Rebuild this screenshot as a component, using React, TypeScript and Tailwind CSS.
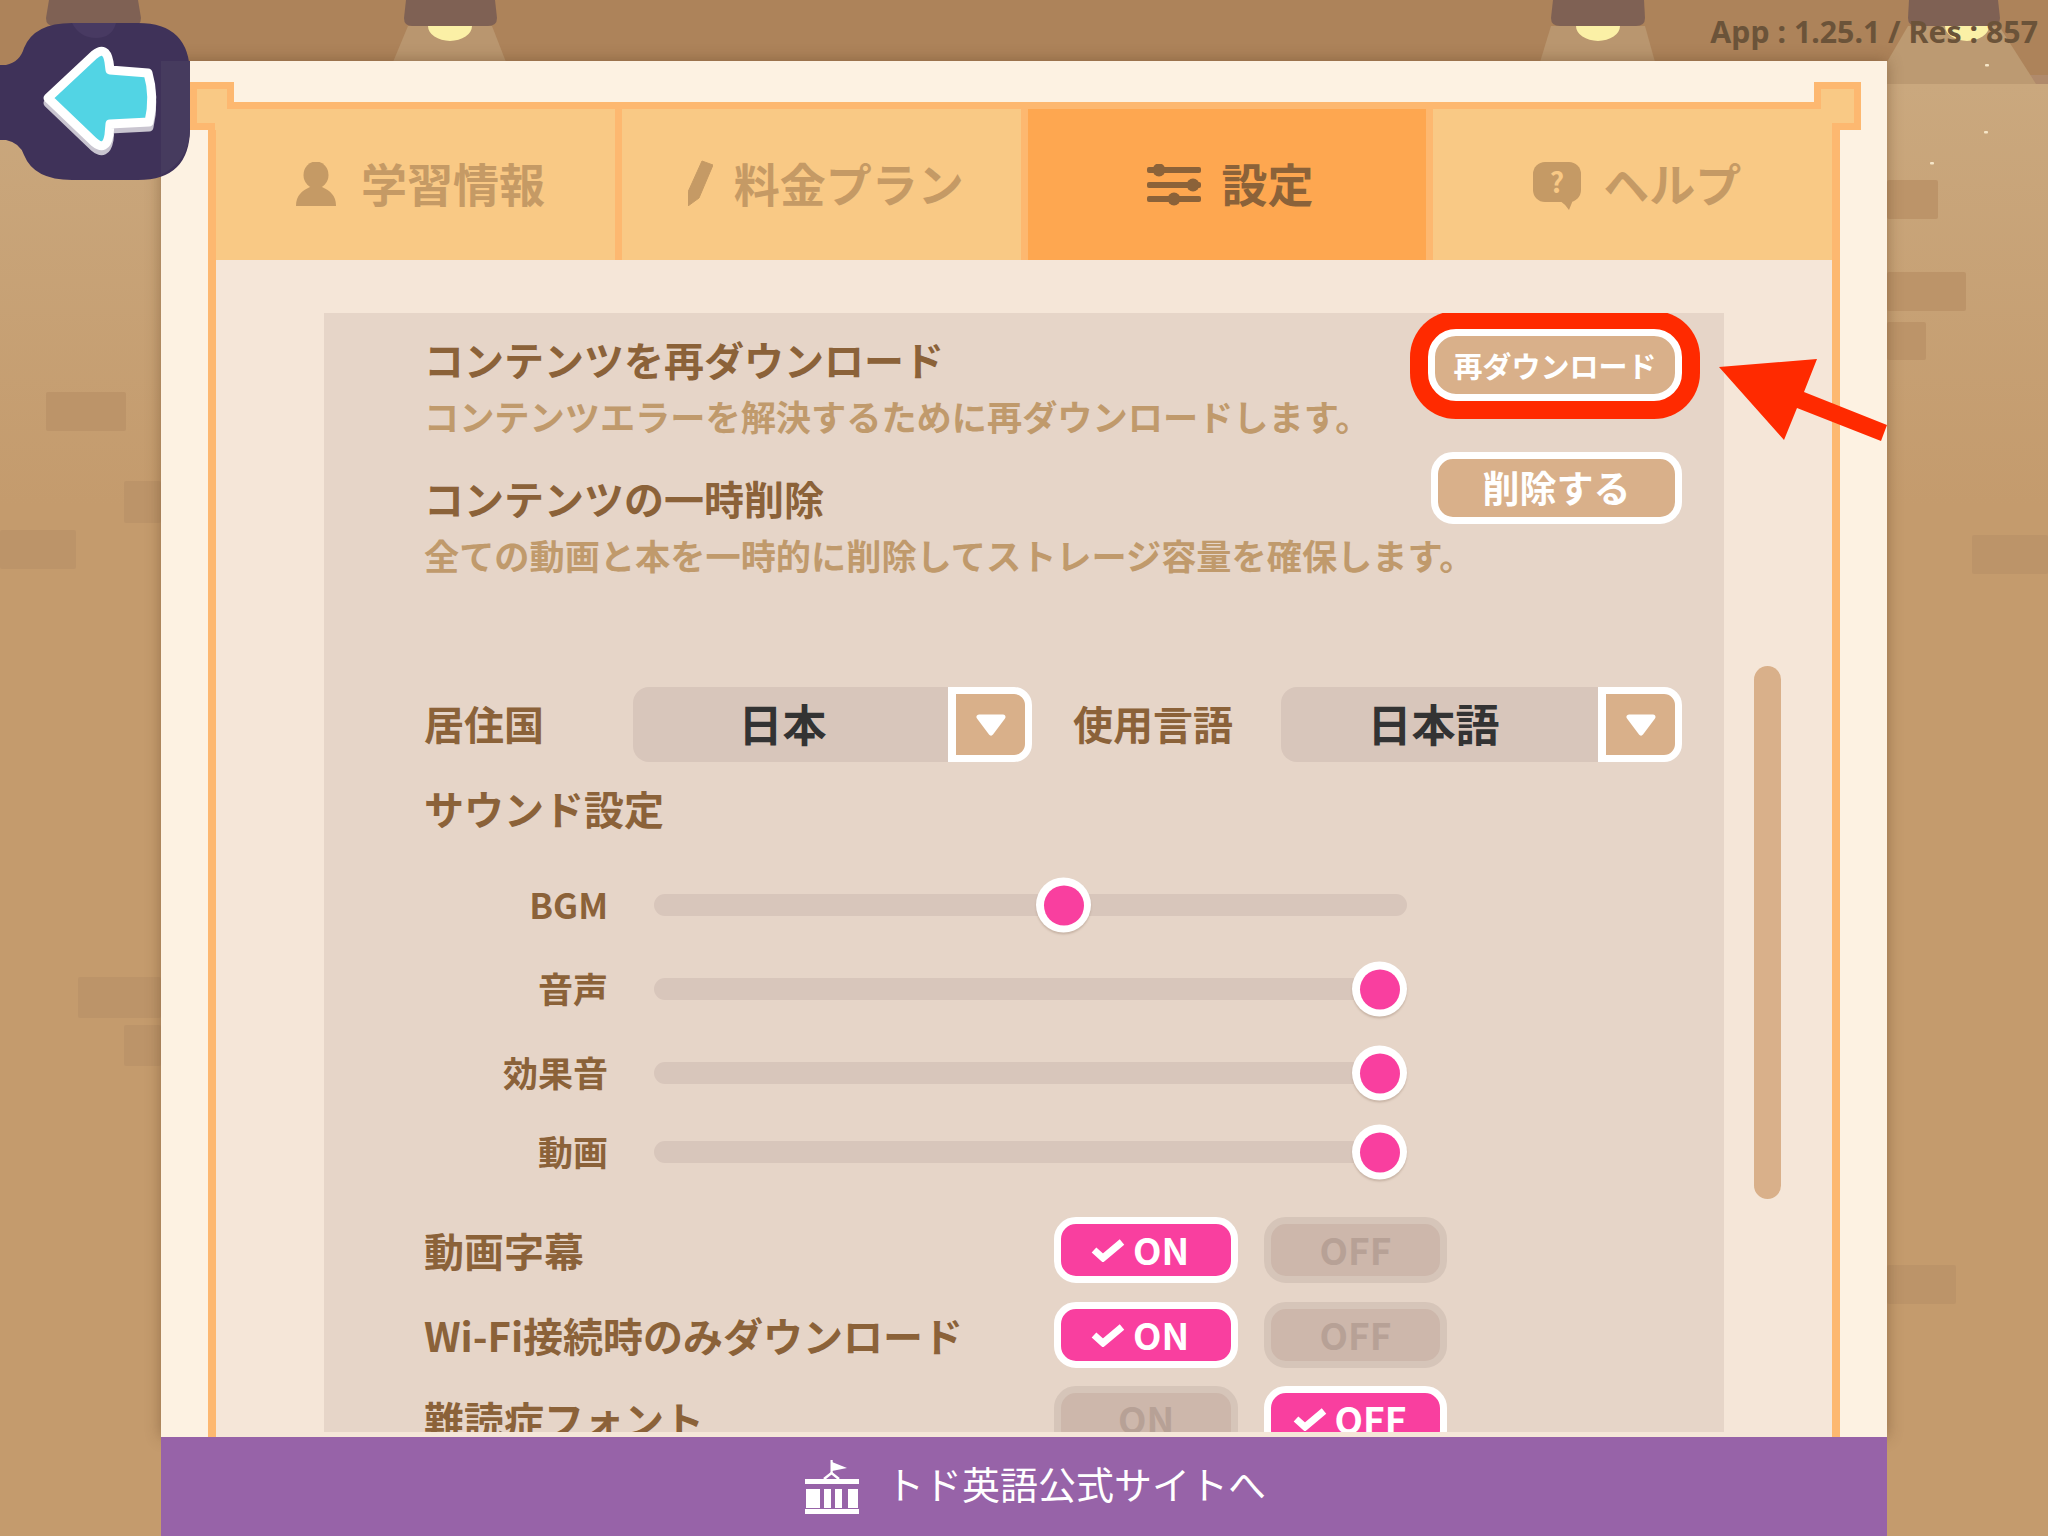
import React from "react";

const jp = "font-['Noto_Sans_CJK_JP',sans-serif]";

function Bricks() {
  const items = [
    "left-[46px] top-[392px] w-[80px] h-[39px]",
    "left-[124px] top-[481px] w-[37px] h-[42px]",
    "left-0 top-[530px] w-[76px] h-[39px]",
    "left-[78px] top-[977px] w-[83px] h-[41px]",
    "left-[124px] top-[1025px] w-[37px] h-[41px]",
    "left-[1887px] top-[180px] w-[51px] h-[39px]",
    "left-[1887px] top-[272px] w-[79px] h-[39px]",
    "left-[1887px] top-[322px] w-[39px] h-[38px]",
    "left-[1972px] top-[535px] w-[76px] h-[39px]",
    "left-[1887px] top-[1265px] w-[69px] h-[39px]",
  ];
  return (
    <>
      {items.map((c) => (
        <div key={c} className={`absolute rounded-[2px] bg-[#bc9469] ${c}`} />
      ))}
    </>
  );
}

function Lamps() {
  return (
    <svg className="absolute left-0 top-0" width="2048" height="200" viewBox="0 0 2048 200">
      <polygon points="408,26 492,26 506,62 393,62" fill="#b9966f" />
      <polygon points="1551,26 1645,26 1655,62 1540,62" fill="#b9966f" />
      <polygon points="1908,26 1999,26 2036,84 1887,84 1887,62" fill="#bc9a72" />
      <path d="M428 26 A22 15 0 0 0 472 26 Z M1576 26 A22 15 0 0 0 1620 26 Z M1945 26 A22 15 0 0 0 1989 26 Z" fill="#fbf0a6" />
      <path d="M49 0 H138 L141 18 Q141 26 132 26 H54 Q46 26 46 18 Z" fill="#7f6154" />
      <path d="M406 0 H495 L497 18 Q497 26 488 26 H412 Q404 26 404 18 Z" fill="#7f6154" />
      <path d="M1553 0 H1644 L1645 18 Q1645 26 1636 26 H1560 Q1551 26 1551 18 Z" fill="#7f6154" />
      <path d="M1909 0 H1998 L2000 18 Q2000 26 1991 26 H1917 Q1908 26 1908 18 Z" fill="#7f6154" />
      {[[15, 224], [1984, 131], [1930, 162], [2032, 223], [1985, 64]].map(([x, y]) => (
        <rect key={x} x={x} y={y} width="4" height="2.5" rx="1" fill="#f6e6c8" />
      ))}
    </svg>
  );
}

function BackButton() {
  const arrow = "M48 98 L94 55 Q106 45 109 62 L110 70 L148 73 Q155 97 149 122 L110 124 L109 135 Q106 152 94 142 Z";
  return (
    <svg className="absolute left-0 top-0" width="200" height="190" viewBox="0 0 200 190">
      <path
        d="M0 65 H6 Q20 62 24 48 Q34 23 72 23 H138 Q190 23 190 75 V128 Q190 180 138 180 H72 Q34 180 24 155 Q20 143 6 140 H0 Z"
        fill="#3f3259"
      />
      <path d="M161 61 H190 V128 Q190 160 161 175 Z" fill="#463b5e" />
      <path d="M72 23 H116 Q112 38 96 38 Q80 38 72 23 Z" fill="#483a62" />
      <path d={arrow} fill="#c9c5d0" stroke="#c9c5d0" strokeWidth="9" strokeLinejoin="round" transform="translate(0 5)" />
      <path d={arrow} fill="#52d4e4" stroke="#ffffff" strokeWidth="9" strokeLinejoin="round" />
    </svg>
  );
}

function PersonIcon() {
  return (
    <svg width="40" height="44" viewBox="0 0 40 44" fill="#c59a65" className="mt-[4px]">
      <ellipse cx="20" cy="13" rx="12.5" ry="13.5" />
      <path d="M0 44 C0 33 6 29 14 25 H26 C34 29 40 33 40 44 Z" />
    </svg>
  );
}

function PencilIcon() {
  return (
    <svg width="25" height="46" viewBox="0 0 25 46" fill="#c59a65" className="mt-[2px]">
      <path d="M14 1 L25 5 L11 38 L0 46 L0 32 Z" stroke="#c59a65" strokeLinejoin="round" strokeWidth="1" />
    </svg>
  );
}

function SlidersIcon() {
  return (
    <svg width="54" height="42" viewBox="0 0 54 42" fill="#8b6239" className="mt-[6px]">
      <rect x="0" y="3" width="54" height="6" rx="2" />
      <rect x="0" y="18" width="54" height="6" rx="2" />
      <rect x="0" y="32" width="54" height="6" rx="2" />
      <circle cx="12" cy="6" r="6.5" />
      <circle cx="46" cy="21" r="6.5" />
      <circle cx="27" cy="35" r="6.5" />
    </svg>
  );
}

function HelpIcon() {
  return (
    <svg width="48" height="48" viewBox="0 0 48 48" fill="#c59a65" className="mt-[8px]">
      <rect x="0" y="0" width="48" height="40" rx="12" />
      <path d="M26 38 H40 L36 48 Q32 42 26 38 Z" />
      <text x="24" y="31" textAnchor="middle" fontSize="28" fontWeight="700" fontFamily="'Noto Sans CJK JP'" fill="#f9c985">?</text>
    </svg>
  );
}

function BuildingIcon() {
  return (
    <svg width="54" height="54" viewBox="0 0 54 54" fill="#ffffff">
      <rect x="25.5" y="0" width="2.2" height="14" />
      <polygon points="27,2 42,8 27,11" />
      <polyline points="19,19 26.5,13 34,19" fill="none" stroke="#ffffff" strokeWidth="2.5" />
      <rect x="0" y="19" width="54" height="5" />
      <rect x="1" y="29" width="14" height="19" />
      <rect x="19" y="29" width="7" height="19" />
      <rect x="30" y="29" width="7" height="19" />
      <rect x="43" y="29" width="10" height="19" />
      <rect x="0" y="49" width="54" height="5.5" />
    </svg>
  );
}

function Tab({ icon, label, active, gap }: { icon: React.ReactNode; label: string; active?: boolean; gap: string }) {
  return (
    <div
      className={`flex items-center justify-center pb-[5px] ${gap} ${active ? "bg-[#fea750] text-[#8b6239]" : "bg-[#f9c985] text-[#c59a65]"}`}
    >
      {icon}
      <span className="text-[46px] font-bold leading-none">{label}</span>
    </div>
  );
}

function ActionRow({
  title,
  desc,
  children,
  className,
}: {
  title: string;
  desc: string;
  children: React.ReactNode;
  className: string;
}) {
  return (
    <div className={`flex items-start justify-between ${className}`}>
      <div className="min-w-0 flex-1 whitespace-nowrap">
        <div className="text-[40px] font-bold leading-[58px] text-[#8b6239]">{title}</div>
        <div className="text-[35.2px] font-bold leading-[56px] text-[#c09a6c]">{desc}</div>
      </div>
      {children}
    </div>
  );
}

function SelectBox({ value, width, shift }: { value: string; width: string; shift: string }) {
  return (
    <div className={`flex h-[75px] items-stretch ${width}`}>
      <div className={`flex flex-1 items-center justify-center rounded-l-[16px] bg-[#d8c6bb] pb-[4px] text-[44px] font-bold text-[#333333] ${shift}`}>
        {value}
      </div>
      <div className="flex w-[84px] items-center justify-center border-[7px] border-l-[8px] border-white bg-[#d9b08a] [border-radius:0_18px_18px_0]">
        <svg width="32" height="24" viewBox="0 0 32 24">
          <polygon points="4,4 28,4 16,20" fill="#ffffff" stroke="#ffffff" strokeWidth="5" strokeLinejoin="round" />
        </svg>
      </div>
    </div>
  );
}

function SliderRow({ label, thumb, className }: { label: string; thumb: string; className: string }) {
  return (
    <div className={`flex h-[56px] items-center ${className}`}>
      <div className="w-[184px] pb-[4px] text-right text-[35px] font-bold leading-none text-[#8b6239]">{label}</div>
      <div className="relative ml-[46px] h-[22px] w-[753px] rounded-full bg-[#d8c6bb]">
        <div
          className={`absolute top-1/2 flex h-[55px] w-[55px] -translate-y-1/2 items-center justify-center rounded-full bg-white shadow-[0_2px_2px_rgba(120,90,70,0.25)] ${thumb}`}
        >
          <div className="h-[40px] w-[40px] rounded-full bg-[#f93f9f]" />
        </div>
      </div>
    </div>
  );
}

function Toggle({ text, on, width }: { text: string; on: boolean; width: string }) {
  if (on) {
    return (
      <div className={`flex h-[66px] items-center justify-center gap-[8px] rounded-[22px] border-[7px] border-white bg-[#f93f9f] pb-[1px] pr-[12px] ${width}`}>
        <svg width="34" height="24" viewBox="0 0 34 24">
          <polyline points="3,12 12,20 31,4" fill="none" stroke="#ffffff" strokeWidth="7" />
        </svg>
        <span className="text-[37px] font-bold leading-none text-white">{text}</span>
      </div>
    );
  }
  return (
    <div className={`flex h-[66px] items-center justify-center rounded-[22px] border-[7px] border-[#d6c5b9] bg-[#cdb7ab] pb-[1px] text-[37px] font-bold leading-none text-[#b7a196] ${width}`}>
      {text}
    </div>
  );
}

function ToggleRow({ label, on, className }: { label: string; on: boolean; className: string }) {
  return (
    <div className={`flex items-center ${className}`}>
      <div className="w-[630px] text-[40px] font-bold leading-none text-[#8b6239]">{label}</div>
      <Toggle text="ON" on={on} width="w-[184px]" />
      <div className="w-[26px]" />
      <Toggle text="OFF" on={!on} width="w-[183px]" />
    </div>
  );
}

function Notch({ side }: { side: "left" | "right" }) {
  const pos = side === "left" ? "-left-[26px] w-[44px]" : "-right-[29px] w-[47px]";
  const patch = side === "left" ? "-right-[7px] w-[19px]" : "-left-[7px] w-[18px]";
  return (
    <div className={`absolute -top-[27px] h-[48px] border-[7px] border-[#fdb870] bg-[#f9c985] ${pos}`}>
      <div className={`absolute -bottom-[7px] h-[21px] bg-[#f9c985] ${patch}`} />
    </div>
  );
}

export default function App() {
  return (
    <div className={`relative h-[1536px] w-[2048px] overflow-hidden bg-[#c49b6d] ${jp}`}>
      <div className="absolute inset-x-0 top-[84px] h-[420px] bg-gradient-to-b from-[#caa87e] to-[#c49b6d]" />
      <div className="absolute inset-x-0 top-0 h-[75px] bg-[#ad835a]" />
      <div className="absolute inset-x-0 top-[75px] h-[9px] bg-[#b08a6b]" />
      <Bricks />
      <Lamps />

      <div className="relative mx-auto flex h-[1536px] w-[1726px] flex-col pt-[61px]">
        <div className="flex min-h-0 flex-1 flex-col bg-[#fdf2e2] px-[47px] pt-[41px] shadow-[0_0_14px_rgba(90,60,30,0.45)]">
          <div className="relative flex min-h-0 flex-1 flex-col border-x-[8px] border-t-[7px] border-[#fdb870]">
            <Notch side="left" />
            <Notch side="right" />
            <div className="grid h-[151px] shrink-0 grid-cols-4 gap-[7px] bg-[#fdb870]">
              <Tab icon={<PersonIcon />} label="学習情報" gap="gap-[25px] pl-[10px]" />
              <Tab icon={<PencilIcon />} label="料金プラン" gap="gap-[21px] pl-[9px]" />
              <Tab icon={<SlidersIcon />} label="設定" active gap="gap-[20px] pl-[7px]" />
              <Tab icon={<HelpIcon />} label="ヘルプ" gap="gap-[22px] pl-[9px]" />
            </div>
            <div className="flex min-h-0 flex-1 bg-[#f5e6d8] pb-[5px] pl-[108px] pt-[53px]">
              <div className="h-full w-[1400px] shrink-0 overflow-hidden bg-[#e6d5c8] pl-[100px] pr-[42px]">
                <ActionRow
                  title="コンテンツを再ダウンロード"
                  desc="コンテンツエラーを解決するために再ダウンロードします。"
                  className="pt-[17px]"
                >
                  <div className="-mt-[1px] flex h-[72px] w-[254px] shrink-0 items-center justify-center rounded-[28px] border-[7px] border-white bg-[#d9b08a] text-[29px] font-bold leading-none text-white shadow-[0_0_0_18px_#ff2a00]">
                    再ダウンロード
                  </div>
                </ActionRow>
                <ActionRow
                  title="コンテンツの一時削除"
                  desc="全ての動画と本を一時的に削除してストレージ容量を確保します。"
                  className="mt-[25px]"
                >
                  <div className="-mt-[17px] flex h-[72px] w-[251px] shrink-0 items-center justify-center rounded-[22px] border-[7px] border-white bg-[#d9b08a] pb-[2px] text-[37px] font-bold leading-none text-white">
                    削除する
                  </div>
                </ActionRow>

                <div className="mt-[104px] flex items-center">
                  <div className="w-[209px] pb-[4px] text-[40px] font-bold leading-none text-[#8b6239]">居住国</div>
                  <SelectBox value="日本" width="w-[399px]" shift="pr-[16px]" />
                  <div className="ml-[41px] w-[208px] pb-[4px] text-[40px] font-bold leading-none text-[#8b6239]">使用言語</div>
                  <SelectBox value="日本語" width="w-[401px]" shift="pr-[12px]" />
                </div>

                <div className="mt-[18px] text-[40px] font-bold leading-[56px] text-[#8b6239]">サウンド設定</div>

                <SliderRow label="BGM" thumb="left-[382px]" className="mt-[41px]" />
                <SliderRow label="音声" thumb="right-0" className="mt-[28px]" />
                <SliderRow label="効果音" thumb="right-0" className="mt-[28px]" />
                <SliderRow label="動画" thumb="right-0" className="mt-[23px]" />

                <ToggleRow label="動画字幕" on className="mt-[37px]" />
                <ToggleRow label="Wi-Fi接続時のみダウンロード" on className="mt-[19px]" />
                <ToggleRow label="難読症フォント" on={false} className="mt-[18px]" />
              </div>
              <div className="ml-[30px] mt-[353px] h-[533px] w-[27px] shrink-0 rounded-full bg-[#d9b08a]" />
            </div>
          </div>
        </div>
        <div className="flex h-[99px] shrink-0 items-center justify-center gap-[27px] bg-[#9763a8] pl-[23px] text-[38px] leading-none text-white">
          <BuildingIcon />
          <span className="pb-[7px]">トド英語公式サイトへ</span>
        </div>
      </div>

      <BackButton />

      <svg className="absolute left-[1700px] top-[340px]" width="200" height="120" viewBox="1700 340 200 120">
        <polygon points="1719,367 1817,359 1804,392 1887,425 1881,441 1797,408 1784,440" fill="#ff2a00" />
      </svg>

      <div className="absolute right-[10px] top-[13px] font-['Noto_Sans',sans-serif] text-[30.3px] font-bold leading-[38px] text-[#6b5339]">
        App : 1.25.1 / Res : 857
      </div>
    </div>
  );
}
